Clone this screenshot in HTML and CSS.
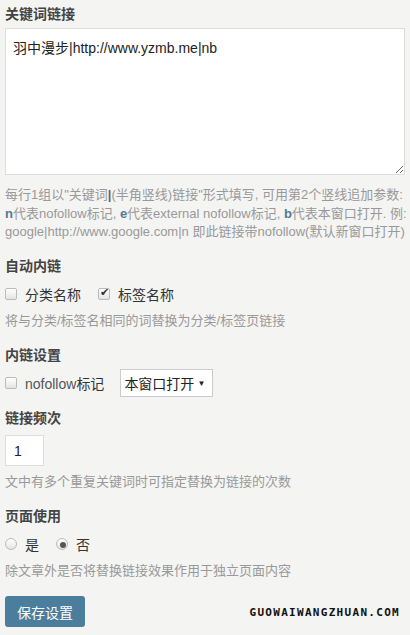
FILE: index.html
```html
<!DOCTYPE html>
<html lang="zh-CN">
<head>
  <meta charset="UTF-8" />
  <title>关键词链接设置</title>
  <link rel="stylesheet" href="styles.css">
</head>
<body>
  <form class="settings">
    <div class="field">
      <h3 class="label">关键词链接</h3>
      <textarea class="keywords">羽中漫步|http://www.yzmb.me|nb</textarea>
      <p class="help help-keywords">每行1组以"关键词<b class="pipe">|</b>(半角竖线)链接"形式填写, 可用第2个竖线追加参数:<br><b>n</b>代表nofollow标记, <b>e</b>代表external nofollow标记, <b>b</b>代表本窗口打开. 例:<br>google|http://www.google.com|n 即此链接带nofollow(默认新窗口打开)</p>
    </div>

    <div class="field">
      <h3 class="label">自动内链</h3>
      <div class="row">
        <label class="opt"><input type="checkbox" class="box"><span>分类名称</span></label>
        <label class="opt"><input type="checkbox" class="box" checked><span>标签名称</span></label>
      </div>
      <p class="help">将与分类/标签名相同的词替换为分类/标签页链接</p>
    </div>

    <div class="field field-tight">
      <h3 class="label">内链设置</h3>
      <div class="row">
        <label class="opt"><input type="checkbox" class="box"><span><span class="latin">nofollow</span>标记</span></label>
        <div class="select"><span>本窗口打开</span><span class="caret">&#9660;</span></div>
      </div>
    </div>

    <div class="field">
      <h3 class="label">链接频次</h3>
      <input type="text" class="num" value="1">
      <p class="help help-num">文中有多个重复关键词时可指定替换为链接的次数</p>
    </div>

    <div class="field">
      <h3 class="label">页面使用</h3>
      <div class="row">
        <label class="opt"><input type="radio" name="page" class="dot"><span>是</span></label>
        <label class="opt"><input type="radio" name="page" class="dot" checked><span>否</span></label>
      </div>
      <p class="help">除文章外是否将替换链接效果作用于独立页面内容</p>
    </div>

    <div class="actions">
      <button type="button" class="save">保存设置</button>
      <span class="mark">GUOWAIWANGZHUAN.COM</span>
    </div>
  </form>
</body>
</html>
```

FILE: styles.css
```css
body {
  background: #f4f4f3;
  font-family: "Liberation Sans", "Noto Sans CJK SC", sans-serif;
  color: #333;
  margin: 0;
  padding: 5px 5px 0;
}

.field {
  margin-bottom: 15.5px;
}

.field-tight {
  margin-bottom: 12px;
}

.label {
  font-size: 14px;
  font-weight: bold;
  color: #444;
  margin: 0 0 5px;
  line-height: 18px;
}

.keywords {
  display: block;
  box-sizing: border-box;
  width: 100%;
  height: 147px;
  border: 1px solid #ddd;
  background: #fff;
  padding: 8px 7px;
  font-family: "Liberation Sans", "Noto Sans CJK SC", sans-serif;
  font-size: 14px;
  color: #222;
  margin: 3px 0 0;
}

.help {
  font-size: 13px;
  color: #999;
  line-height: 18.5px;
  margin: 4px 0 0;
  white-space: nowrap;
}

.help b {
  color: #557a94;
}

.help b.pipe {
  color: #666;
}

.help-keywords {
  margin-top: 11px;
}

.help-num {
  margin-top: 7px;
}

.row {
  display: flex;
  align-items: center;
  gap: 17px;
  height: 28px;
  font-size: 14px;
  color: #333;
}

.opt {
  display: flex;
  align-items: center;
  gap: 8px;
  white-space: nowrap;
}

.latin {
  color: #555;
}

.box,
.dot {
  appearance: none;
  margin: 0;
  width: 12px;
  height: 12px;
  border: 1px solid #bbb;
  background: linear-gradient(#fff, #e4e4e4);
  position: relative;
}

.box {
  border-radius: 2px;
}

.dot {
  border-radius: 50%;
}

.box:checked::after {
  content: "\2714";
  position: absolute;
  left: 1px;
  top: -3px;
  font-size: 11px;
  color: #333;
}

.dot:checked::after {
  content: "";
  position: absolute;
  left: 3px;
  top: 3px;
  width: 6px;
  height: 6px;
  border-radius: 50%;
  background: #555;
}

.select {
  box-sizing: border-box;
  flex-shrink: 0;
  width: 93px;
  height: 28px;
  margin-left: -1px;
  padding: 0 7px 0 3px;
  border: 1px solid #ccc;
  background: #fff;
  display: flex;
  align-items: center;
  justify-content: space-between;
  white-space: nowrap;
  font-size: 14px;
  color: #222;
}

.caret {
  font-size: 8px;
}

.num {
  display: block;
  box-sizing: border-box;
  width: 39px;
  height: 31px;
  border: 1px solid #ddd;
  background: #fff;
  padding: 0 8px;
  font-family: "Liberation Sans", sans-serif;
  font-size: 14px;
  color: #222;
  margin: 8px 0 0;
}

.actions {
  display: flex;
  align-items: flex-end;
  justify-content: space-between;
  padding-right: 5px;
}

.save {
  background: #4a7e9c;
  color: #fff;
  border: none;
  border-radius: 3px;
  width: 80px;
  height: 31px;
  font-family: "Liberation Sans", "Noto Sans CJK SC", sans-serif;
  font-size: 14px;
}

.mark {
  font-family: "DejaVu Sans Mono", monospace;
  font-weight: bold;
  font-size: 11px;
  letter-spacing: 1.3px;
  color: #111;
  margin-bottom: 8px;
}
```
